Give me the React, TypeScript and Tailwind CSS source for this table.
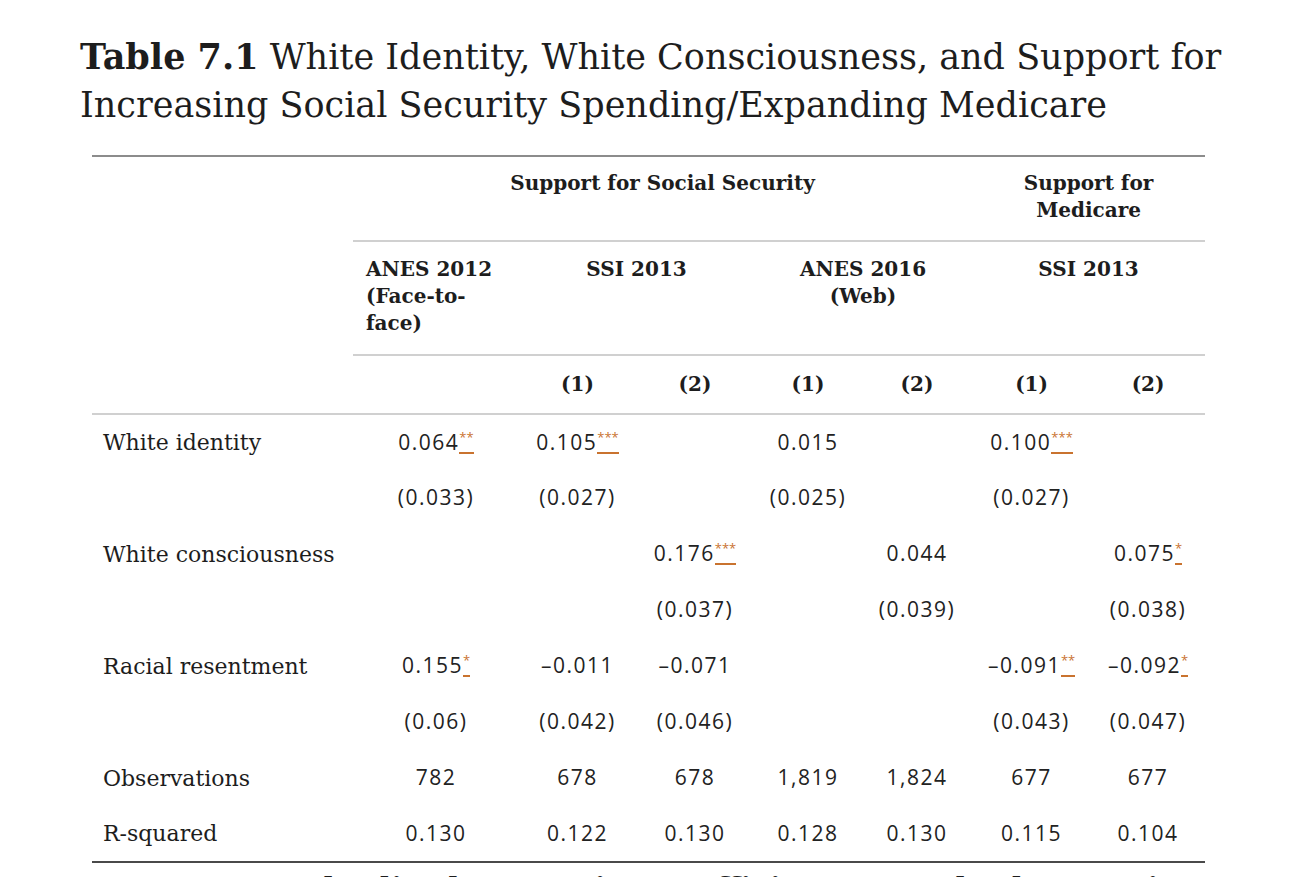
import React from 'react';

// ============================================
// 표 데이터
// ============================================

type Cell = { v: string; star?: string } | null;

interface Row {
  label?: string;
  cells: Cell[];
}

const SERIF = "font-['DejaVu_Serif',serif]";
const SANS = "font-['Open_Sans','Noto_Sans',sans-serif]";

const c = (v: string, star?: string): Cell => ({ v, star });

const ROWS: Row[] = [
  { label: 'White identity', cells: [c('0.064', '**'), c('0.105', '***'), null, c('0.015'), null, c('0.100', '***'), null] },
  { cells: [c('(0.033)'), c('(0.027)'), null, c('(0.025)'), null, c('(0.027)'), null] },
  { label: 'White consciousness', cells: [null, null, c('0.176', '***'), null, c('0.044'), null, c('0.075', '*')] },
  { cells: [null, null, c('(0.037)'), null, c('(0.039)'), null, c('(0.038)')] },
  { label: 'Racial resentment', cells: [c('0.155', '*'), c('–0.011'), c('–0.071'), null, null, c('–0.091', '**'), c('–0.092', '*')] },
  { cells: [c('(0.06)'), c('(0.042)'), c('(0.046)'), null, null, c('(0.043)'), c('(0.047)')] },
  { label: 'Observations', cells: [c('782'), c('678'), c('678'), c('1,819'), c('1,824'), c('677'), c('677')] },
  { label: 'R-squared', cells: [c('0.130'), c('0.122'), c('0.130'), c('0.128'), c('0.130'), c('0.115'), c('0.104')] },
];

const COL_WIDTHS = [261, 166, 117, 118, 108, 110, 119, 114];

// ============================================
// 유의수준 표시 (별표)
// ============================================

function Stars({ s }: { s: string }) {
  return (
    <span className="inline-block border-b-2 border-[#c9732f] text-[#c9732f] text-[13px] leading-[13px] tracking-normal align-baseline">
      <span className="relative -top-[8px]">{s}</span>
    </span>
  );
}

function DataCell({ cell }: { cell: Cell }) {
  return (
    <td className={`${SANS} text-[21px] tracking-[1.5px] text-center align-middle p-0 text-[#222]`}>
      {cell ? (
        <span>
          {cell.v}
          {cell.star && <Stars s={cell.star} />}
        </span>
      ) : null}
    </td>
  );
}

// ============================================
// 메인
// ============================================

export default function App() {
  const head = `${SERIF} font-bold text-[20px] leading-[27px] text-[#1d1d1d]`;
  const rule = 'border-b-2 border-[#d0d0d0]';

  return (
    <div className="min-h-screen bg-white text-[#1d1d1d] overflow-hidden">
      <h1 className={`${SERIF} pl-[80px] pt-[33px] text-[35px] leading-[48px] font-normal whitespace-nowrap`}>
        <span className="font-bold">Table 7.1</span> White Identity, White Consciousness, and Support for
        <br />
        Increasing Social Security Spending/Expanding Medicare
      </h1>

      <table className="ml-[92px] mt-[26px] w-[1113px] border-collapse table-fixed border-t-2 border-t-[#8c8c8c] border-b-2 border-b-[#4a4a4a]">
        <colgroup>
          {COL_WIDTHS.map((w, i) => (
            <col key={i} style={{ width: w }} />
          ))}
        </colgroup>
        <thead>
          {/* 1단 헤더 */}
          <tr className="h-[85px]">
            <th className="p-0" />
            <th colSpan={5} className={`${head} ${rule} align-top pt-[13px] text-center`}>
              Support for Social Security
            </th>
            <th colSpan={2} className={`${head} ${rule} align-top pt-[13px] text-center`}>
              Support for
              <br />
              Medicare
            </th>
          </tr>
          {/* 2단 헤더 */}
          <tr className="h-[114px]">
            <th className="p-0" />
            <th className={`${head} ${rule} align-top pt-[14px] pl-[13px] text-left`}>
              ANES 2012
              <br />
              (Face-to-
              <br />
              face)
            </th>
            <th colSpan={2} className={`${head} ${rule} align-top pt-[14px] text-center`}>
              SSI 2013
            </th>
            <th colSpan={2} className={`${head} ${rule} align-top pt-[14px] text-center`}>
              ANES 2016
              <br />
              (Web)
            </th>
            <th colSpan={2} className={`${head} ${rule} align-top pt-[14px] text-center`}>
              SSI 2013
            </th>
          </tr>
          {/* 모델 번호 */}
          <tr className="h-[59px] border-b-2 border-[#d0d0d0]">
            <th className="p-0" />
            <th className="p-0" />
            {['(1)', '(2)', '(1)', '(2)', '(1)', '(2)'].map((t, i) => (
              <th key={i} className={`${head} align-middle text-center`}>
                {t}
              </th>
            ))}
          </tr>
        </thead>
        <tbody>
          {ROWS.map((row, i) => (
            <tr key={i} className="h-[56px]">
              <td className={`${SERIF} text-[22px] pl-[11px] align-middle text-[#1d1d1d] whitespace-nowrap`}>
                {row.label ?? ''}
              </td>
              {row.cells.map((cell, j) => (
                <DataCell key={j} cell={cell} />
              ))}
            </tr>
          ))}
        </tbody>
      </table>

      <p className={`${SERIF} pl-[92px] mt-[11px] text-[30px] font-bold leading-[30px] whitespace-nowrap`}>
        Note: Unstandardized regression coefficients, standard errors in parentheses.
      </p>
    </div>
  );
}
